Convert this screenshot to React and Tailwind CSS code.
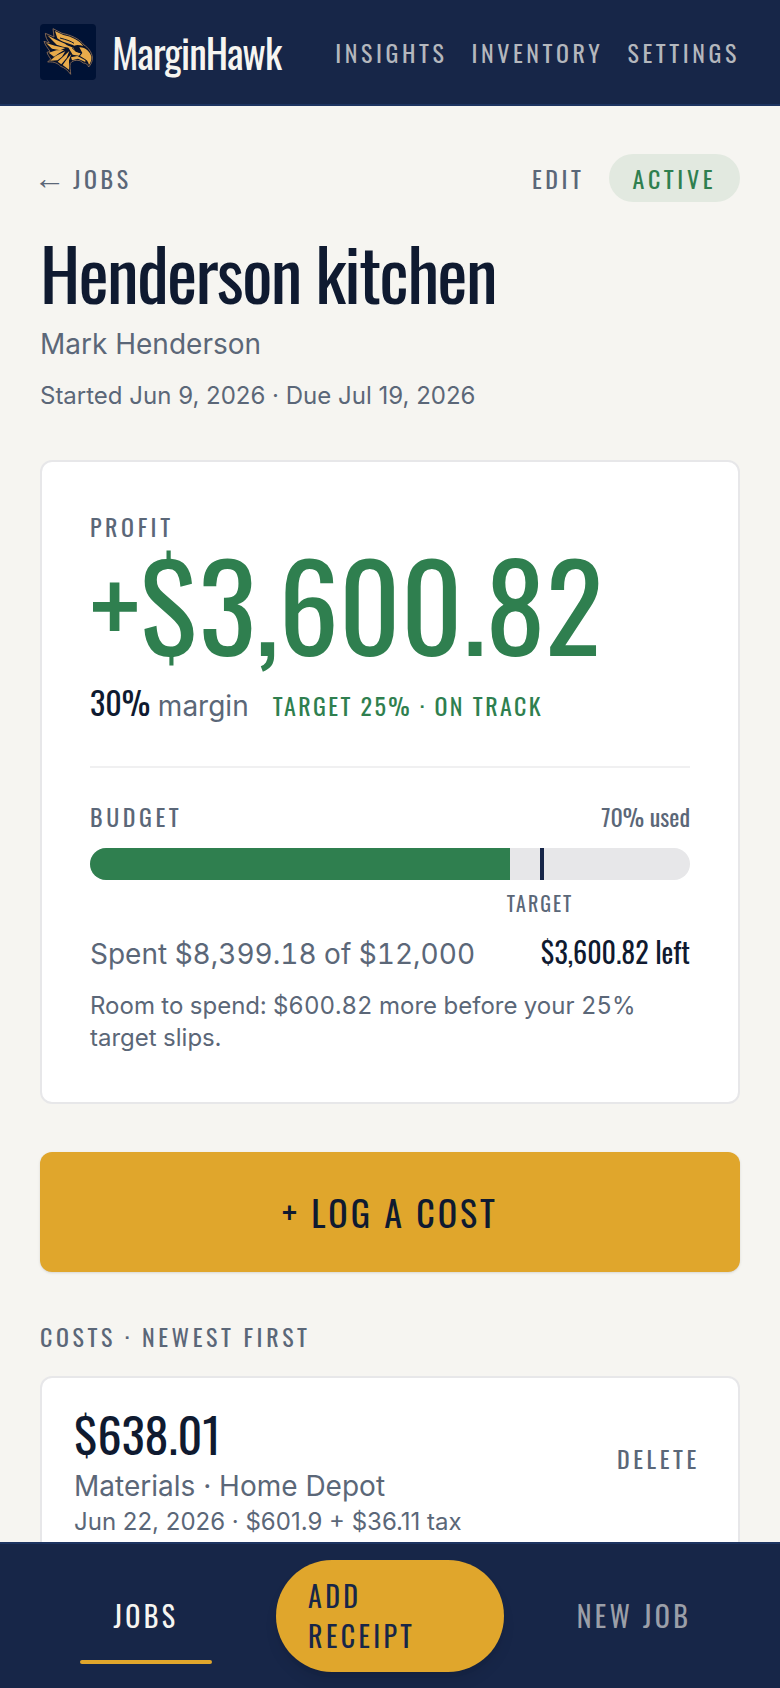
const display = "font-[Oswald,'Roboto_Condensed',sans-serif]"
const label = `${display} text-2xl leading-8 uppercase tracking-[0.15em]`

const job = {
  name: 'Henderson kitchen',
  client: 'Mark Henderson',
  dates: 'Started Jun 9, 2026 · Due Jul 19, 2026',
  profit: '+$3,600.82',
  margin: 30,
  target: 25,
  used: 70,
}

const costs = [
  { id: 1, amount: '$638.01', title: 'Materials · Home Depot', detail: 'Jun 22, 2026 · $601.9 + $36.11 tax' },
]

const navLinks = ['Insights', 'Inventory', 'Settings']

const HawkLogo = () => (
  <svg viewBox="30 27 168 168" className="size-14 shrink-0 rounded-sm bg-[#001235]" aria-hidden="true">
    <path
      d="M69 41 L96 55 C122 60 148 71 162 90 C174 97 185 111 187 126 C188 139 183 148 176 156 C173 148 168 144 160 144 L150 137 C137 134 126 137 121 145 C118 155 122 166 122 178 C113 165 103 158 92 154 C84 146 74 139 53 141 L62 132 C57 124 53 119 51 112 L60 109 C53 99 46 91 42 79 L58 84 C51 75 46 65 46 55 L72 66 Z"
      fill="#07122b"
      stroke="#94735a"
      strokeWidth="2.5"
      strokeLinejoin="round"
    />
    <g fill="#e8ab4b">
      <path d="M75 48 L100 60 C125 65 148 76 160 93 C150 90 140 88 133 92 C116 84 96 82 82 70 Z" />
      <path d="M52 61 L78 74 L105 86 L122 99 L99 95 L80 89 Z" />
      <path d="M48 84 L75 92 L106 99 L91 106 L66 101 Z" />
      <path d="M56 113 L79 106 L103 105 L87 115 L72 125 Z" />
      <path d="M60 137 L77 123 L106 109 L96 125 L83 136 Z" />
      <path d="M83 140 L101 124 L118 108 L110 129 L94 148 Z" />
      <path d="M98 150 L111 132 L124 117 L117 136 L117 164 Z" />
      <path d="M111 91 L130 98 L137 110 L152 115 L147 122 L128 119 Z" />
      <path d="M148 97 C166 96 181 111 184 125 C185 136 181 144 177 150 C175 140 170 134 161 130 L150 123 L157 114 Z" />
      <path d="M123 127 L142 123 L166 136 L166 141 L144 131 L126 136 Z" />
    </g>
    <path
      d="M126 98 C134 107 144 112 155 113 M139 103 C145 99 149 103 146 107 M90 69 C108 74 122 78 132 85"
      fill="none"
      stroke="#07122b"
      strokeWidth="3"
    />
  </svg>
)

const Header = () => (
  <header className="flex items-center justify-between border-b-2 border-[#1d3461] bg-[#172648] px-10 py-6">
    <a href="#home" className="flex items-center gap-4">
      <HawkLogo />
      <span className={`${display} text-[40px] leading-[56px] tracking-tight text-[#f6f5f1]`}>MarginHawk</span>
    </a>
    <nav className="flex gap-6">
      {navLinks.map((link) => (
        <a key={link} href={`#${link.toLowerCase()}`} className={`${label} text-[#b4b7bd]`}>
          {link}
        </a>
      ))}
    </nav>
  </header>
)

const ProfitCard = () => (
  <section className="mt-12 rounded-xl border-2 border-[#e7e7e9] bg-white p-12 tabular-nums">
    <h2 className={label}>Profit</h2>
    <p className={`${display} text-[120px] leading-[120px] text-[#2f7f4f]`}>{job.profit}</p>
    <div className="mt-5 flex items-baseline gap-6">
      <p className="text-[28px] leading-10">
        <span className={`${display} text-[32px] leading-10 text-[#0f1a30]`}>{job.margin}%</span> margin
      </p>
      <p className={`${display} text-2xl leading-8 tracking-widest text-[#2f7f4f] uppercase`}>
        Target {job.target}% · On track
      </p>
    </div>

    <div className="mt-10 border-t-2 border-[#f0f0f1] pt-8">
      <div className="flex items-baseline justify-between">
        <h2 className={label}>Budget</h2>
        <span className={`${display} text-2xl leading-8`}>{job.used}% used</span>
      </div>
      <div className="relative mt-4 h-8 overflow-hidden rounded-full bg-[#e7e7e9]">
        <div className="h-full bg-[#2f7f4f]" style={{ width: `${job.used}%` }} />
        <div className="absolute inset-y-0 w-1 bg-[#172648]" style={{ left: `${100 - job.target}%` }} />
      </div>
      <div className="mt-2 flex">
        <span
          className={`${display} -translate-x-1/2 text-xl leading-[30px] tracking-widest uppercase`}
          style={{ marginLeft: `${100 - job.target}%` }}
        >
          Target
        </span>
      </div>
      <div className="mt-4 flex items-baseline justify-between">
        <p className="text-[28px] leading-10">Spent $8,399.18 of $12,000</p>
        <p className={`${display} text-[28px] leading-9 text-[#0f1a30]`}>$3,600.82 left</p>
      </div>
      <p className="mt-4 text-2xl leading-8">Room to spend: $600.82 more before your 25% target slips.</p>
    </div>
  </section>
)

const CostItem = ({ cost }) => (
  <li className="flex items-start justify-between rounded-xl border-2 border-[#e7e7e9] bg-white px-8 py-7">
    <div>
      <p className={`${display} text-5xl leading-[56px] tabular-nums text-[#0f1a30]`}>{cost.amount}</p>
      <p className="mt-1 text-[28px] leading-10">{cost.title}</p>
      <p className="text-2xl leading-8">{cost.detail}</p>
    </div>
    <button type="button" className={`${label} h-26 px-1.5`}>
      Delete
    </button>
  </li>
)

const BottomNav = () => (
  <nav
    className={`${display} fixed inset-x-0 bottom-0 flex items-center gap-6 border-t-2 border-[#1d3461] bg-[#172648] px-10 py-4 text-[28px] leading-10 tracking-[0.12em] uppercase`}
  >
    <a href="#jobs" className="relative flex h-28 flex-1 items-center justify-center text-[#f6f5f1]">
      Jobs
      <span className="absolute inset-x-10 bottom-2 h-1 rounded-full bg-[#e0a62c]" />
    </a>
    <a
      href="#receipt"
      className="flex h-28 w-[228px] items-center rounded-full bg-[#e0a62c] px-8 text-[#172648] shadow-lg"
    >
      Add Receipt
    </a>
    <a href="#new" className="flex h-28 flex-1 items-center justify-center text-[#9b9fa8]">
      New job
    </a>
  </nav>
)

const App = () => {
  return (
    <div className="min-h-screen bg-[#f6f5f1] font-[Inter,sans-serif] text-[#5b6778]">
      <Header />
      <main className="px-10 pt-12 pb-44">
        <div className="flex items-center justify-between">
          <a href="#jobs" className="flex items-baseline gap-3.5">
            <span className="font-['Liberation_Mono',monospace] text-[32px] leading-6">←</span>
            <span className={label}>Jobs</span>
          </a>
          <div className="flex items-center gap-6">
            <button type="button" className={label}>
              Edit
            </button>
            <span className={`${label} rounded-full bg-[#e2e9e0] px-6 py-2 text-[#2f7f4f]`}>Active</span>
          </div>
        </div>

        <h1 className={`${display} mt-8 text-7xl leading-[76px] tracking-tight text-[#0f1a30]`}>{job.name}</h1>
        <p className="mt-3 text-[28px] leading-11">{job.client}</p>
        <p className="mt-3.5 text-2xl leading-8">{job.dates}</p>

        <ProfitCard />

        <button
          type="button"
          className={`${display} mt-12 h-[120px] w-full rounded-xl bg-[#e0a62c] text-4xl tracking-[3px] text-[#0f1a30] uppercase shadow-sm`}
        >
          + Log a cost
        </button>

        <h2 className={`${label} mt-12`}>Costs · Newest first</h2>
        <ul className="mt-6 flex flex-col gap-4">
          {costs.map((cost) => (
            <CostItem key={cost.id} cost={cost} />
          ))}
        </ul>
      </main>
      <BottomNav />
    </div>
  )
}

export default App
